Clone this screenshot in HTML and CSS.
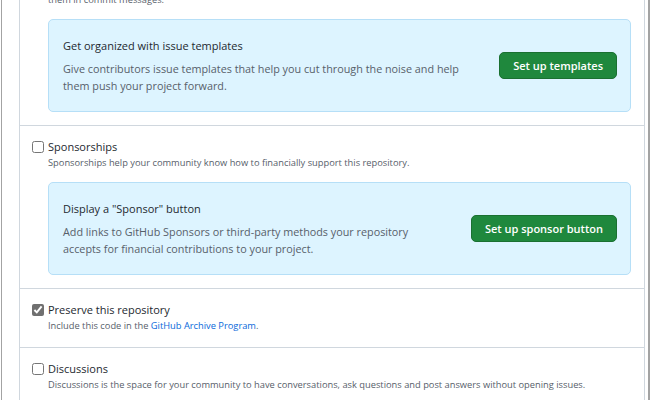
FILE: index.html
```html
<!DOCTYPE html>
<html lang="en">
<head>
<meta charset="utf-8">
<title>Features</title>
<link rel="stylesheet" href="styles.css">
</head>
<body>
<div class="window">
  <div class="panel">
    <div class="row">
      <input type="checkbox" class="cb" checked>
      <div class="content">
        <div class="title">Issues</div>
        <p class="desc">Issues integrate lightweight task tracking into your repository. Keep projects on track with issue labels and milestones, and reference<br>them in commit messages.</p>
        <div class="callout">
          <div class="callout-text">
            <div class="callout-title">Get organized with issue templates</div>
            <p class="callout-desc">Give contributors issue templates that help you cut through the noise and help<br>them push your project forward.</p>
          </div>
          <button class="btn" type="button">Set up templates</button>
        </div>
      </div>
    </div>
    <div class="row">
      <input type="checkbox" class="cb">
      <div class="content">
        <div class="title">Sponsorships</div>
        <p class="desc">Sponsorships help your community know how to financially support this repository.</p>
        <div class="callout">
          <div class="callout-text">
            <div class="callout-title">Display a "Sponsor" button</div>
            <p class="callout-desc">Add links to GitHub Sponsors or third-party methods your repository<br>accepts for financial contributions to your project.</p>
          </div>
          <button class="btn" type="button">Set up sponsor button</button>
        </div>
      </div>
    </div>
    <div class="row">
      <input type="checkbox" class="cb" checked>
      <div class="content">
        <div class="title">Preserve this repository</div>
        <p class="desc">Include this code in the <a href="#" class="link">GitHub Archive Program</a>.</p>
      </div>
    </div>
    <div class="row">
      <input type="checkbox" class="cb">
      <div class="content">
        <div class="title">Discussions</div>
        <p class="desc">Discussions is the space for your community to have conversations, ask questions and post answers without opening issues.</p>
      </div>
    </div>
  </div>
</div>
</body>
</html>
```

FILE: styles.css
```css
html, body {
  margin: 0;
  padding: 0;
  background: #ffffff;
  height: 400px;
  overflow: hidden;
}

body {
  font-family: "Open Sans", "Noto Sans", sans-serif;
  color: #24292f;
}

.window {
  display: flow-root;
  margin-left: 1px;
  height: 400px;
  border-left: 1px solid #a3a3a3;
  border-right: 2px solid #a3a3a3;
  padding: 0 3px 0 17px;
  background: #ffffff;
}

.panel {
  margin-top: -54px;
  border: 1px solid #d0d7de;
  border-bottom: none;
}

.row {
  display: flex;
  align-items: flex-start;
  padding: 12px 13px 13px 12px;
  border-top: 1px solid #d0d7de;
}

.row:first-child {
  border-top: none;
}

.cb {
  width: 12px;
  height: 12px;
  margin: 3px 4px 0 0;
  flex: none;
  accent-color: #707070;
}

.content {
  flex: 1;
  min-width: 0;
}

.title {
  font-size: 11px;
  line-height: 17px;
  color: #24292f;
}

.desc {
  margin: 0;
  font-size: 9.3px;
  line-height: 16px;
  color: #57606a;
}

.link {
  color: #0969da;
  text-decoration: none;
}

.callout {
  margin-top: 11px;
  display: flex;
  align-items: center;
  gap: 16px;
  padding: 17px 13px 17px 14px;
  background: #ddf4ff;
  border: 1px solid #b6dff7;
  border-radius: 5px;
}

.callout-text {
  flex: 1;
  min-width: 0;
}

.callout-title {
  font-size: 11px;
  line-height: 17px;
  color: #24292f;
  margin-bottom: 6px;
}

.callout-desc {
  margin: 0;
  font-size: 10.8px;
  line-height: 17px;
  color: #57606a;
}

.btn {
  flex: none;
  height: 27px;
  padding: 0 13px;
  font-family: "Open Sans", "Noto Sans", sans-serif;
  font-size: 11px;
  font-weight: 600;
  color: #ffffff;
  background: #1f883d;
  border: 1px solid #1a7031;
  border-radius: 5px;
}
```
